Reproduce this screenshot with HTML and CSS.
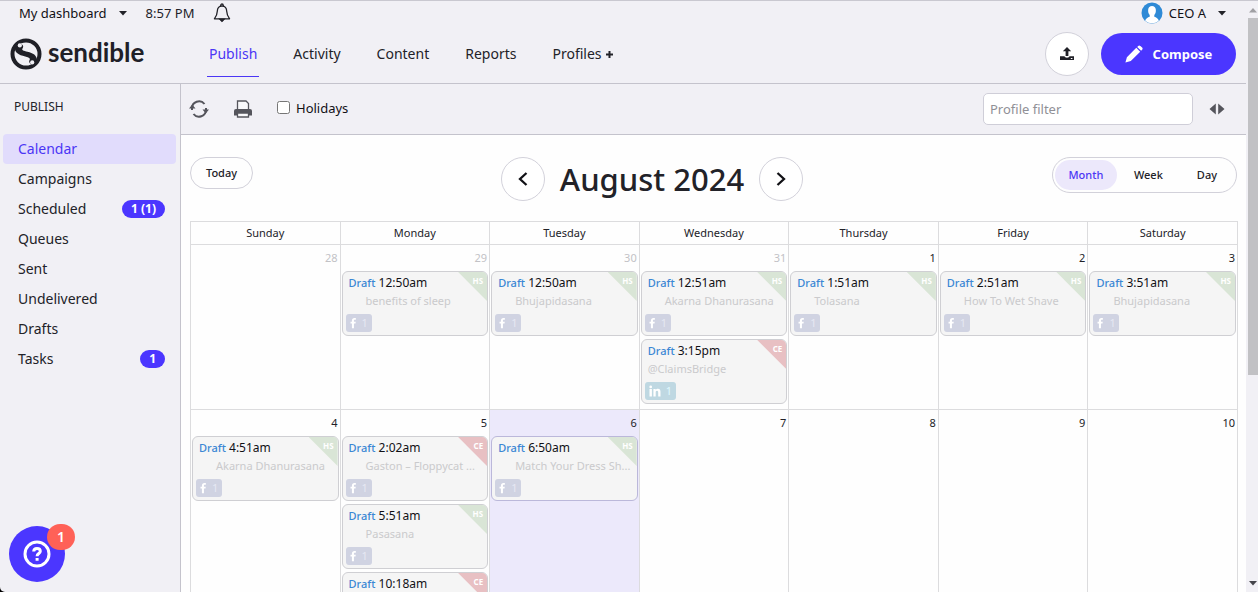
FILE: index.html
```html
<!DOCTYPE html>
<html lang="en">
<head>
<meta charset="utf-8">
<title>Sendible – Publish calendar</title>
<link rel="stylesheet" href="styles.css">
</head>
<body>
<svg class="sprite" aria-hidden="true">
  <symbol id="fb" viewBox="0 0 8 12"><path d="M2.2 12V6.6H.6V4.5h1.6V3.1C2.2 1.200 3.300.2 5 .2c.8 0 1.500.1 1.700.1v2H5.500c-.8 0-1 .4-1 1v1.200h2.100l-.3 2.100H4.500V12z"/></symbol>
  <symbol id="li" viewBox="0 0 12 12"><path d="M.5 4h2.400v7.500H.5zM1.700.6a1.300 1.300 0 1 1 0 2.700 1.300 1.300 0 0 1 0-2.700zM4.400 4h2.300v1c.4-.7 1.200-1.200 2.200-1.200 2.200 0 2.600 1.400 2.600 3.400v4.300H9.200V7.700c0-1 0-2-1.200-2s-1.300 1-1.300 1.900v3.900H4.400z"/></symbol>
  <symbol id="caret" viewBox="0 0 8 5"><path d="M0 0h8L4 4.600z"/></symbol>
</svg>
<div class="app">
  <div class="page">
    <header class="header">
      <div class="topline">
        <button class="menu" type="button">My dashboard <svg class="caret"><use href="#caret"/></svg></button>
        <span class="clock">8:57 PM</span>
        <button class="plain" type="button" aria-label="Notifications">
          <svg width="18" height="20" viewBox="0 0 18 20" fill="none" stroke="#222228" stroke-width="1.300"><path d="M7.800 3.300V2.200a1.200 1.200 0 0 1 2.400 0v1.100M9 3.200C6 3.200 4.400 5.400 4.300 8.200 4.200 12 3.500 13 1.400 15.800h15.200C14.500 13 13.800 12 13.700 8.200 13.600 5.400 12 3.200 9 3.200z" stroke-linejoin="round"/><path d="M6.800 16.200h4.400L9 18.400z" fill="#222228"/></svg>
        </button>
        <button class="menu account" type="button">
          <svg width="22" height="22" viewBox="0 0 22 22"><circle cx="11" cy="11" r="10.500" fill="#2f8ad6"/><path d="M4.200 18.800c.5-2.600 2.500-3.300 4.500-4.100V13C7.300 11.700 7 9.800 7.200 7.600 7.400 5.200 8.800 4 11 4s3.600 1.200 3.800 3.600c.2 2.200-.1 4.100-1.500 5.400v1.700c2 .8 4 1.500 4.500 4.100A10.500 10.500 0 0 1 4.200 18.800z" fill="#fff"/></svg>
          CEO A <svg class="caret"><use href="#caret"/></svg></button>
      </div>
      <div class="mainline">
        <a class="logo" href="#">
          <svg width="32" height="32" viewBox="0 0 32 32"><circle cx="16" cy="16" r="13.500" fill="none" stroke="#202027" stroke-width="4"/><path d="M7.500 6.500C12 5 14.500 8 12.500 10.500c-1 1.800 1 2.300 5 3.300 5.500 1.400 9.500 3.500 9.300 8.200-.1 1.500-.8 3-2.300 4.500-4 .5-6.500-2-4.800-4.700.8-1.300-.5-2.300-4.500-3.300C8.500 16.900 4.500 14.500 5 10z" fill="#202027"/><circle cx="9.800" cy="7.400" r="2.100" fill="#f1f0f5"/><circle cx="22.200" cy="24.400" r="2.100" fill="#f1f0f5"/></svg>
          <span>sendible</span></a>
        <nav class="tabs">
          <a class="tab current" href="#">Publish</a>
          <a class="tab" href="#">Activity</a>
          <a class="tab" href="#">Content</a>
          <a class="tab" href="#">Reports</a>
          <a class="tab" href="#">Profiles <svg width="9" height="9" viewBox="0 0 9 9"><path d="M4.500 1v7M1 4.500h7" stroke="#222228" stroke-width="2"/></svg></a>
        </nav>
        <button class="round upload" type="button" aria-label="Upload"><svg width="16" height="16" viewBox="0 0 16 16" fill="#202027"><path d="M8 1l4.200 4.300H9.400V10H6.600V5.300H3.800zM1 10.300h4.600c.2 1 1 1.400 2.400 1.400s2.200-.4 2.400-1.400H15V14H1z"/><path d="M11.800 12h1.600v1h-1.600z" fill="#fff"/></svg></button>
        <button class="compose" type="button"><svg width="18" height="18" viewBox="0 0 18 18" fill="#fff"><path d="M.4 17.600L1.900 12.200 11.300 2.800l3.900 3.900-9.400 9.400zM12.200 1.900l1-1c.7-.7 1.500-.7 2.200 0l1.700 1.700c.7.7.7 1.500 0 2.200l-1 1z"/></svg>Compose</button>
      </div>
    </header>
    <aside class="sidebar">
      <h2>PUBLISH</h2>
      <a class="item current" href="#">Calendar</a>
      <a class="item" href="#">Campaigns</a>
      <a class="item" href="#">Scheduled <span class="count">1 (1)</span></a>
      <a class="item" href="#">Queues</a>
      <a class="item" href="#">Sent</a>
      <a class="item" href="#">Undelivered</a>
      <a class="item" href="#">Drafts</a>
      <a class="item" href="#">Tasks <span class="count">1</span></a>
    </aside>
    <main class="main">
      <div class="toolbar">
        <button class="plain" type="button" aria-label="Refresh"><svg width="20" height="18" viewBox="0 0 20 18" fill="none" stroke="#55555c" stroke-width="2"><path d="M3 10V8.500A7 7 0 0 1 15.500 4M17 8v1.500A7 7 0 0 1 4.500 14"/><path d="M0 8.500h6.500L3.200 4.500zM13.500 9.500H20L16.800 13.500z" fill="#55555c" stroke="none"/></svg></button>
        <button class="plain" type="button" aria-label="Print"><svg width="20" height="18" viewBox="0 0 20 18"><path d="M4.500 9V1h8.500l2.500 2.500V9" fill="#f8f8fa" stroke="#55555c" stroke-width="1.300"/><path d="M3 9h14a2 2 0 0 1 2 2v4.500H1V11a2 2 0 0 1 2-2z" fill="#55555c"/><path d="M4.500 13h11v4h-11z" fill="#f8f8fa" stroke="#55555c" stroke-width="1.300"/></svg></button>
        <label class="check"><input type="checkbox"> Holidays</label>
        <input class="filter" type="text" placeholder="Profile filter" aria-label="Profile filter">
        <button class="plain" type="button" aria-label="Toggle width"><svg width="16" height="12" viewBox="0 0 16 12" fill="#55555c"><path d="M6.800.5v11L.5 6zM9.200.5v11L15.500 6z"/></svg></button>
      </div>
      <div class="controls">
        <button class="pill" type="button">Today</button>
        <div class="period">
          <button class="round" type="button" aria-label="Previous month"><svg width="12" height="16" viewBox="0 0 12 16"><path d="M9.500 2L3 8l6.500 6" fill="none" stroke="#111116" stroke-width="2.300"/></svg></button>
          <h1>August 2024</h1>
          <button class="round" type="button" aria-label="Next month"><svg width="12" height="16" viewBox="0 0 12 16"><path d="M2.500 2L9 8l-6.500 6" fill="none" stroke="#111116" stroke-width="2.300"/></svg></button>
        </div>
        <div class="views"><button class="on" type="button">Month</button><button type="button">Week</button><button type="button">Day</button></div>
      </div>
      <table class="calendar">
        <thead><tr><th>Sunday</th><th>Monday</th><th>Tuesday</th><th>Wednesday</th><th>Thursday</th><th>Friday</th><th>Saturday</th></tr></thead>
        <tbody>
          <tr>
            <td><div class="date other">28</div></td>
            <td><div class="date other">29</div>
              <article class="event"><p class="when"><b>Draft</b> 12:50am</p><p class="text inset">benefits of sleep</p><span class="net"><svg class="fb"><use href="#fb"/></svg>1</span><span class="corner">HS</span></article></td>
            <td><div class="date other">30</div>
              <article class="event"><p class="when"><b>Draft</b> 12:50am</p><p class="text inset">Bhujapidasana</p><span class="net"><svg class="fb"><use href="#fb"/></svg>1</span><span class="corner">HS</span></article></td>
            <td><div class="date other">31</div>
              <article class="event"><p class="when"><b>Draft</b> 12:51am</p><p class="text inset">Akarna Dhanurasana</p><span class="net"><svg class="fb"><use href="#fb"/></svg>1</span><span class="corner">HS</span></article>
              <article class="event"><p class="when"><b>Draft</b> 3:15pm</p><p class="text">@ClaimsBridge</p><span class="net linked"><svg class="li"><use href="#li"/></svg>1</span><span class="corner ce">CE</span></article></td>
            <td><div class="date">1</div>
              <article class="event"><p class="when"><b>Draft</b> 1:51am</p><p class="text inset">Tolasana</p><span class="net"><svg class="fb"><use href="#fb"/></svg>1</span><span class="corner">HS</span></article></td>
            <td><div class="date">2</div>
              <article class="event"><p class="when"><b>Draft</b> 2:51am</p><p class="text inset">How To Wet Shave</p><span class="net"><svg class="fb"><use href="#fb"/></svg>1</span><span class="corner">HS</span></article></td>
            <td><div class="date">3</div>
              <article class="event"><p class="when"><b>Draft</b> 3:51am</p><p class="text inset">Bhujapidasana</p><span class="net"><svg class="fb"><use href="#fb"/></svg>1</span><span class="corner">HS</span></article></td>
          </tr>
          <tr>
            <td><div class="date">4</div>
              <article class="event"><p class="when"><b>Draft</b> 4:51am</p><p class="text inset">Akarna Dhanurasana</p><span class="net"><svg class="fb"><use href="#fb"/></svg>1</span><span class="corner">HS</span></article></td>
            <td><div class="date">5</div>
              <article class="event"><p class="when"><b>Draft</b> 2:02am</p><p class="text inset">Gaston – Floppycat ...</p><span class="net"><svg class="fb"><use href="#fb"/></svg>1</span><span class="corner ce">CE</span></article>
              <article class="event"><p class="when"><b>Draft</b> 5:51am</p><p class="text inset">Pasasana</p><span class="net"><svg class="fb"><use href="#fb"/></svg>1</span><span class="corner">HS</span></article>
              <article class="event"><p class="when"><b>Draft</b> 10:18am</p><span class="corner ce">CE</span></article></td>
            <td class="today"><div class="date">6</div>
              <article class="event"><p class="when"><b>Draft</b> 6:50am</p><p class="text inset">Match Your Dress Sh...</p><span class="net"><svg class="fb"><use href="#fb"/></svg>1</span><span class="corner">HS</span></article></td>
            <td><div class="date">7</div></td>
            <td><div class="date">8</div></td>
            <td><div class="date">9</div></td>
            <td><div class="date">10</div></td>
          </tr>
        </tbody>
      </table>
    </main>
  </div>
  <div class="scrollbar" aria-hidden="true">
    <svg class="arrow" viewBox="0 0 8 5"><path d="M0 4.600h8L4 0z" fill="#a0a0a4"/></svg>
    <div class="track"><div class="thumb"></div></div>
    <svg class="arrow"><use href="#caret"/></svg>
  </div>
  <button class="help" type="button" aria-label="Help">
    <svg width="28" height="28" viewBox="0 0 28 28" fill="none" stroke="#fff" stroke-width="3"><circle cx="14" cy="14" r="12"/><path d="M10.700 11.600c0-2 1.400-3.200 3.300-3.200s3.300 1.100 3.300 2.800c0 2.300-3.200 2.300-3.200 5"/><path d="M12.600 18h3v2.800h-3z" fill="#fff" stroke="none"/></svg>
    <span class="alert">1</span>
  </button>
</div>
</body>
</html>
```

FILE: styles.css
```css
* { box-sizing: border-box; }

body {
  margin: 0;
  background: #000;
  color: #222228;
  font: 14px/20px "Noto Sans", sans-serif;
}

h1, h2, p { margin: 0; font-weight: 400; }
a { color: inherit; text-decoration: none; }

button {
  display: flex;
  align-items: center;
  justify-content: center;
  padding: 0;
  border: 0;
  background: none;
  color: inherit;
  font: inherit;
  cursor: pointer;
}

.sprite { display: none; }

.app {
  position: relative;
  display: flex;
  height: 100vh;
  overflow: hidden;
  background: #f1f0f5;
  border-top: 1px solid #c9c8d0;
  border-bottom-left-radius: 5px;
}

.page {
  flex: 1;
  min-width: 0;
  display: grid;
  grid-template: auto minmax(0, 1fr) / 181px minmax(0, 1fr);
}

/* Header */
.header { grid-column: 1 / -1; border-bottom: 1px solid #c4c3cc; }

.topline {
  display: flex;
  align-items: center;
  height: 24px;
  padding: 0 20px 0 19px;
  font-size: 13px;
}

.menu { gap: 12px; color: #111116; }
.caret { width: 8px; height: 5px; fill: #222228; }
.clock { margin: 0 19px; }
.account { margin-left: auto; gap: 6px; }
.account .caret { margin-left: 6px; }

.mainline {
  display: flex;
  align-items: center;
  height: 58px;
  padding: 0 10px;
}

.logo { display: flex; align-items: center; gap: 6px; width: 197px; }
.logo span { font: 700 26px/32px Lato, sans-serif; color: #202027; padding-bottom: 4px; }

.tabs { display: flex; gap: 32px; height: 46px; margin-right: auto; }
.tab { height: 46px; padding: 13px 2px; }
.tab.current { color: #4b36f5; border-bottom: 1px solid #4b36f5; }

.round {
  width: 44px;
  height: 44px;
  border: 1px solid #d2d1da;
  border-radius: 50%;
  background: #fff;
}

.compose {
  gap: 10px;
  width: 135px;
  height: 42px;
  margin-left: 12px;
  border-radius: 21px;
  background: #4b36ff;
  color: #fff;
  font-size: 13px;
  font-weight: 700;
}

/* Sidebar */
.sidebar { padding: 0 4px 0 3px; border-right: 1px solid #c4c3cc; }
.sidebar h2 { padding: 13px 11px 17px; font-size: 12px; line-height: 20px; }

.item {
  display: flex;
  align-items: center;
  justify-content: space-between;
  height: 30px;
  padding: 0 11px 0 15px;
  border-radius: 4px;
}

.item.current { background: #e1dcfc; color: #4b36f5; }

.count {
  padding: 0 9px;
  border-radius: 9px;
  background: #4b36ff;
  color: #fff;
  font-size: 12px;
  font-weight: 700;
  line-height: 18px;
}

/* Main area */
.main { background: #fefefe; overflow: hidden; }

.toolbar {
  display: flex;
  align-items: center;
  gap: 24px;
  height: 51px;
  padding: 0 21px 0 8px;
  background: #f1f0f5;
  border-bottom: 1px solid #c4c3cc;
}

.check { display: flex; align-items: center; gap: 6px; padding-bottom: 3px; font-size: 13px; color: #111116; }
.check input { width: 13px; height: 13px; margin: 0; }

.filter {
  width: 210px;
  height: 32px;
  margin-left: auto;
  padding: 0 6px;
  border: 1px solid #cfced8;
  border-radius: 5px;
  background: #fff;
  font: 13px/20px "Noto Sans", sans-serif;
}

.filter::placeholder { color: #909096; }
.filter + .plain { margin-left: -8px; }

.controls {
  display: grid;
  grid-template-columns: 1fr auto 1fr;
  align-items: start;
  padding: 22px 9px 20px;
}

.pill {
  width: 63px;
  height: 32px;
  border: 1px solid #d2d1da;
  border-radius: 16px;
  font-size: 11px;
  font-weight: 500;
}

.period { display: flex; align-items: center; gap: 15px; padding-right: 123px; }
.period h1 { font-size: 31px; line-height: 44px; font-weight: 500; white-space: nowrap; }

.views {
  display: flex;
  justify-self: end;
  height: 36px;
  padding: 2px;
  border: 1px solid #d2d1da;
  border-radius: 18px;
  font-size: 11px;
  font-weight: 500;
}

.views button { padding: 0 17px; }
.views .on { width: 62px; padding: 0; border-radius: 15px; background: #ece8fb; color: #4b36f5; }

/* Month grid */
.calendar {
  width: calc(100% - 17px);
  margin-left: 9px;
  table-layout: fixed;
  border-collapse: collapse;
}

.calendar th, .calendar td { padding: 0 1px; border: 1px solid #dcdcde; }
.calendar th { height: 23px; font-size: 11px; font-weight: 400; line-height: 20px; }
.calendar td { height: 165px; padding-bottom: 1px; vertical-align: top; }
.calendar .today { background: #ece9fb; }

.date {
  padding-right: 1px;
  font-size: 11px;
  line-height: 26px;
  text-align: right;
}

.date.other { color: #c2c2c6; }

.event {
  position: relative;
  height: 65px;
  margin-bottom: 3px;
  padding: 2px 6px;
  overflow: hidden;
  border: 1px solid #cfcfd3;
  border-radius: 6px;
  background: #f5f5f5;
}

.today .event { border-color: #bbb8da; }
.when { font-size: 12px; line-height: 18px; color: #111116; }
.when b { font-size: 11px; font-weight: 500; color: #3b87d4; }
.text { font-size: 11px; line-height: 18px; color: #cacacc; white-space: nowrap; }
.inset { padding-left: 17px; }

.net {
  display: flex;
  align-items: center;
  gap: 5px;
  width: 26px;
  height: 18px;
  margin: 4px -3px;
  padding-left: 4px;
  border-radius: 3px;
  background: #d0d3e2;
  color: #e6e8f3;
  font-size: 11px;
}

.linked { width: 31px; background: #bfd8e2; color: #e0f8ff; }
.fb { width: 7px; height: 12px; fill: #fff; }
.li { width: 12px; height: 12px; fill: #fff; }

.corner {
  position: absolute;
  top: 0;
  right: 0;
  width: 29px;
  height: 29px;
  padding-right: 4px;
  background: #d9e5d6;
  clip-path: polygon(0 0, 100% 0, 100% 100%);
  color: #fff;
  font-size: 8px;
  font-weight: 700;
  line-height: 18px;
  text-align: right;
}

.ce { background: #e8c0c3; }

/* Window scroll bar */
.scrollbar {
  display: flex;
  flex-direction: column;
  align-items: center;
  width: 12px;
  padding: 7px 0 6px 2px;
}

.arrow { width: 8px; height: 5px; fill: #44444a; }
.track { flex: 1; width: 100%; margin: 5px 0; }
.thumb { height: 64%; background: #c1c1c4; }

/* Floating help button */
.help {
  position: absolute;
  left: 9px;
  bottom: 10px;
  width: 56px;
  height: 56px;
  border-radius: 50%;
  background: #4b36ff;
}

.alert {
  position: absolute;
  top: -2px;
  right: -10px;
  width: 28px;
  border-radius: 13px;
  background: #ff6157;
  color: #fff;
  font-weight: 600;
  line-height: 26px;
}
```
